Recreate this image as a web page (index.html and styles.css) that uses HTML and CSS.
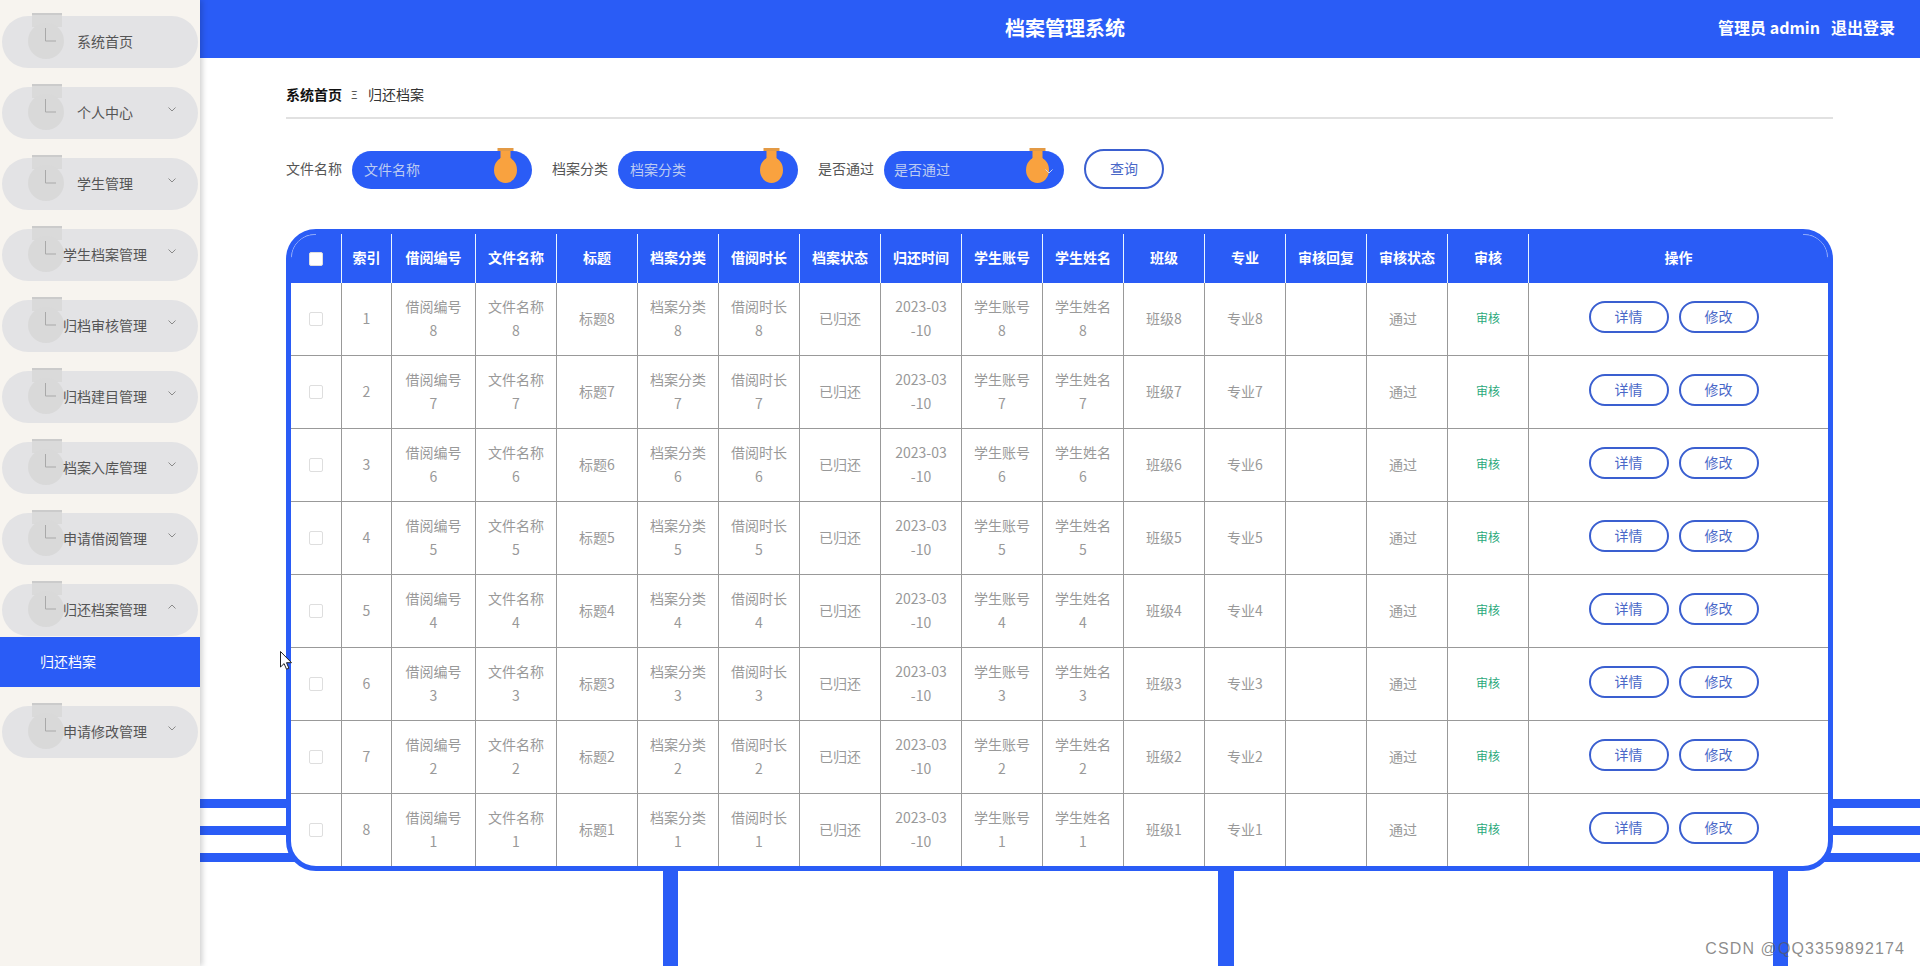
FILE: index.html
```html
<!DOCTYPE html>
<html lang="zh">
<head>
    <meta charset="utf-8">
    <title>档案管理系统</title>
    <link rel="stylesheet" href="styles.css">
</head>
<body>
    <aside class="sidebar" id="sidebar"></aside>
    <div class="content">
        <header class="topbar">
            <span></span>
            <h1 class="title">档案管理系统</h1>
            <div class="user"><b>管理员 admin</b><b>退出登录</b></div>
        </header>
        <main class="main">
            <div class="crumbs">
                <b>系统首页</b>
                <span class="crumb-sep">Ξ</span>
                <span>归还档案</span>
            </div>
            <div class="search">
                <label class="search-label">文件名称</label>
                <div class="field"><span class="placeholder">文件名称</span><svg class="drop"><use href="#drop"/></svg></div>
                <label class="search-label">档案分类</label>
                <div class="field"><span class="placeholder">档案分类</span><svg class="drop"><use href="#drop"/></svg></div>
                <label class="search-label">是否通过</label>
                <div class="field field-select">
                    <span class="placeholder">是否通过</span>
                    <svg class="drop"><use href="#drop"/></svg>
                    <svg class="field-arrow" viewBox="0 0 8 5"><path d="M.5.5 4 4 7.5.5" fill="none" stroke="#c8d4f0"/></svg>
                </div>
                <button class="btn btn-search">查询</button>
            </div>
            <div class="table-box">
                <table class="table">
                    <colgroup id="cols"></colgroup>
                    <thead><tr id="head"></tr></thead>
                    <tbody id="rows"></tbody>
                </table>
            </div>
        </main>
    </div>
    <svg class="cursor" viewBox="0 0 12 19"><path d="M.5.5v15.5l3.6-3.4 2.4 5.6 2.4-1-2.4-5.5h5z" fill="#fff" stroke="#222"/></svg>
    <div class="watermark">CSDN @QQ3359892174</div>

    <svg class="defs" width="0" height="0">
        <symbol id="drop" viewBox="0 0 23 35">
            <path d="M6.5 2h10v8l3 4h-16l3-4z" fill="#F9A23F"/>
            <ellipse cx="11.5" cy="22" rx="11.5" ry="13" fill="#F9A23F"/>
            <path d="M3.5 0h16v3h-16z" fill="#E39A45"/>
        </symbol>
    </svg>
    <script src="app.js"></script>
</body>
</html>
```

FILE: styles.css
```css
* { box-sizing: border-box; }

html, body
{
    margin: 0;
    height: 966px;
    overflow: hidden;
}

body
{
    display: flex;
    font-family: "Noto Sans CJK SC", "Noto Sans", sans-serif;
    font-size: 14px;
    background: #FFF;
    color: #555;
}

/* sidebar */
.sidebar
{
    flex: 0 0 200px;
    display: flex;
    flex-direction: column;
    gap: 19px;
    padding-top: 16px;
    background: #F7F4EF;
    box-shadow: 2px 0 6px rgba(0, 0, 0, .2);
    z-index: 1;
}

.menu
{
    position: relative;
    display: flex;
    align-items: center;
    justify-content: center;
    height: 52px;
    margin: 0 2px;
    padding: 0 0 2px 10px;
    border-radius: 26px;
    background: #E3E3E5;
    color: #555;
}

.menu-icon
{
    position: absolute;
    left: 26px;
    top: -3px;
    width: 36px;
    height: 46px;
}

.menu-text { position: relative; }

.menu-arrow
{
    position: absolute;
    right: 22px;
    top: 20px;
    width: 8px;
    height: 5px;
}

.submenu
{
    height: 50px;
    margin-top: -18px;
    padding: 0 0 2px 40px;
    line-height: 48px;
    background: #2A5CF6;
    color: #FFF;
}

/* top bar */
.content
{
    flex: 1;
    display: flex;
    flex-direction: column;
    min-width: 0;
}

.topbar
{
    display: grid;
    grid-template-columns: 1fr auto 1fr;
    align-items: center;
    height: 58px;
    padding: 0 25px 3px 35px;
    background: #2A5CF6;
    color: #FFF;
}

.title
{
    margin: 0;
    font-size: 20px;
    font-weight: bold;
}

.user
{
    display: flex;
    justify-content: flex-end;
    gap: 11px;
    padding-bottom: 2px;
    font-size: 16px;
}

/* page */
.main
{
    flex: 1;
    padding: 0 87px 0 86px;
    background-color: #FFF;
    background-image:
        linear-gradient(#2A5CF6, #2A5CF6),
        linear-gradient(#2A5CF6, #2A5CF6),
        linear-gradient(#2A5CF6, #2A5CF6),
        linear-gradient(#2A5CF6, #2A5CF6),
        linear-gradient(#2A5CF6, #2A5CF6),
        linear-gradient(#2A5CF6, #2A5CF6);
    background-repeat: no-repeat;
    background-size: 100% 9px, 100% 9px, 100% 9px, 15px 120px, 16px 120px, 15px 120px;
    background-position: 0 741px, 0 768px, 0 795px, 463px 800px, 1018px 800px, 1573px 800px;
}

.crumbs
{
    display: flex;
    align-items: center;
    height: 61px;
    padding-top: 12px;
    border-bottom: 2px solid #E1E1E1;
    color: #333;
}

.crumbs b { color: #111; }

.crumb-sep
{
    width: 26px;
    padding-left: 9px;
    font-size: 11px;
}

.search
{
    display: flex;
    align-items: center;
    height: 40px;
    margin-top: 30px;
}

.search-label
{
    margin-right: 10px;
    padding-bottom: 2px;
}

.field
{
    position: relative;
    display: flex;
    align-items: center;
    width: 180px;
    height: 38px;
    margin: 2px 20px 0 0;
    padding: 0 0 3px 12px;
    border-radius: 19px;
    background: #2A5CF6;
}

.field-select { padding-left: 10px; }

.placeholder { color: #BCCBF2; }

.drop
{
    position: absolute;
    top: -3px;
    right: 15px;
    width: 23px;
    height: 35px;
}

.field-arrow
{
    position: absolute;
    top: 18px;
    right: 11px;
    width: 8px;
    height: 5px;
}

.btn
{
    height: 32px;
    width: 80px;
    padding: 0 0 2px;
    border: 2px solid #3A5FD0;
    border-radius: 16px;
    background: #FFF;
    color: #4A68C8;
    font: inherit;
}

.btn-search
{
    height: 40px;
    border-radius: 20px;
}

/* table */
.table-box
{
    margin-top: 40px;
    height: 642px;
    border: 5px solid #2A5CF6;
    border-radius: 30px;
    background: #FFF;
    overflow: hidden;
}

.table
{
    width: 1537px;
    table-layout: fixed;
    border-collapse: separate;
    border-spacing: 0;
    text-align: center;
}

.table th
{
    position: relative;
    height: 49px;
    padding: 0 0 3px;
    border-right: 1px solid #E8F4FF;
    background: #2A5CF6;
    color: #FFF;
    font-weight: bold;
}

.table th:first-child { padding: 0; }

/* faint arc in the two top corners */
.table th:first-child::before,
.table th:last-child::before
{
    content: "";
    position: absolute;
    top: 0;
    width: 24px;
    height: 22px;
    border-top: 1px solid rgba(255, 255, 255, .45);
}

.table th:first-child::before
{
    left: 0;
    border-left: 1px solid rgba(255, 255, 255, .45);
    border-top-left-radius: 24px;
}

.table th:last-child::before
{
    right: 0;
    border-right: 1px solid rgba(255, 255, 255, .45);
    border-top-right-radius: 24px;
}

.table td
{
    height: 73px;
    padding: 10px 12px 13px;
    border-right: 1px solid #999;
    border-bottom: 1px solid #999;
    color: #999;
    line-height: 24px;
    word-break: break-all;
}

.table th:last-child,
.table td:last-child { border-right: 0; }

.table td.status { padding-right: 20px; }

.table td.audit
{
    padding: 0 0 2px;
    color: #2BA97C;
    font-size: 12px;
}

.table td.check { padding: 0; }

.box
{
    display: block;
    width: 14px;
    height: 14px;
    margin: auto;
    border: 1px solid #DEDEDE;
    border-radius: 2px;
    background: #FFF;
}

.table td.actions { padding: 0 10px 5px 0; }

.actions-row
{
    display: flex;
    justify-content: center;
    gap: 10px;
}

/* over everything */
.cursor
{
    position: absolute;
    left: 280px;
    top: 651px;
    width: 12px;
    height: 19px;
    z-index: 2;
}

.watermark
{
    position: absolute;
    right: 15px;
    top: 940px;
    font-family: "Liberation Sans", sans-serif;
    font-size: 16px;
    letter-spacing: 1.1px;
    color: rgba(90, 90, 90, .7);
    z-index: 2;
}

.defs { position: absolute; }
```

FILE: app.js
```js
var menus = [
    ["系统首页", ""],
    ["个人中心", "down"],
    ["学生管理", "down"],
    ["学生档案管理", "down"],
    ["归档审核管理", "down"],
    ["归档建目管理", "down"],
    ["档案入库管理", "down"],
    ["申请借阅管理", "down"],
    ["归还档案管理", "up"],
    ["申请修改管理", "down"]
];

var headers = ["", "索引", "借阅编号", "文件名称", "标题", "档案分类", "借阅时长", "档案状态", "归还时间",
    "学生账号", "学生姓名", "班级", "专业", "审核回复", "审核状态", "审核", "操作"];

var widths = [51, 50, 84, 81, 81, 81, 81, 81, 81, 81, 81, 81, 81, 81, 81, 81, 299];

var iconSvg = '<svg class="menu-icon" viewBox="0 0 36 46">'
    + '<path d="M4 0h30v14H4z" fill="#DADADA"/>'
    + '<circle cx="18" cy="28" r="18" fill="#D9D9D9"/>'
    + '<path d="M4 0h30v2H4z" fill="#CBCBCB"/>'
    + '<path d="M17.5 15v13H28" fill="none" stroke="#A9A9A9"/></svg>';

function arrowSvg(dir)
{
    var d = dir == "up" ? "M.5 4.5 4 1l3.5 3.5" : "M.5.5 4 4 7.5.5";
    return '<svg class="menu-arrow" viewBox="0 0 8 5"><path d="' + d + '" fill="none" stroke="#8A8A8A"/></svg>';
}

var sidebar = document.getElementById("sidebar");
var html = "";
for (var i = 0; i < menus.length; i++)
{
    html += '<div class="menu">' + iconSvg + '<span class="menu-text">' + menus[i][0] + '</span>'
        + (menus[i][1] ? arrowSvg(menus[i][1]) : "") + '</div>';
    if (menus[i][1] == "up")
    {
        html += '<div class="submenu">归还档案</div>';
    }
}
sidebar.innerHTML = html;

var cols = "", head = "";
for (i = 0; i < headers.length; i++)
{
    cols += '<col style="width:' + widths[i] + 'px">';
    head += "<th>" + (i == 0 ? '<span class="box"></span>' : headers[i]) + "</th>";
}
document.getElementById("cols").innerHTML = cols;
document.getElementById("head").innerHTML = head;

var rows = "";
for (i = 1; i <= 8; i++)
{
    var n = 9 - i;
    rows += "<tr>"
        + '<td class="check"><span class="box"></span></td>'
        + "<td>" + i + "</td>"
        + "<td>借阅编号" + n + "</td>"
        + "<td>文件名称" + n + "</td>"
        + "<td>标题" + n + "</td>"
        + "<td>档案分类" + n + "</td>"
        + "<td>借阅时长" + n + "</td>"
        + "<td>已归还</td>"
        + "<td>2023-03-10</td>"
        + "<td>学生账号" + n + "</td>"
        + "<td>学生姓名" + n + "</td>"
        + "<td>班级" + n + "</td>"
        + "<td>专业" + n + "</td>"
        + "<td></td>"
        + '<td class="status">通过</td>'
        + '<td class="audit">审核</td>'
        + '<td class="actions"><div class="actions-row"><button class="btn">详情</button><button class="btn">修改</button></div></td>'
        + "</tr>";
}
document.getElementById("rows").innerHTML = rows;
```
